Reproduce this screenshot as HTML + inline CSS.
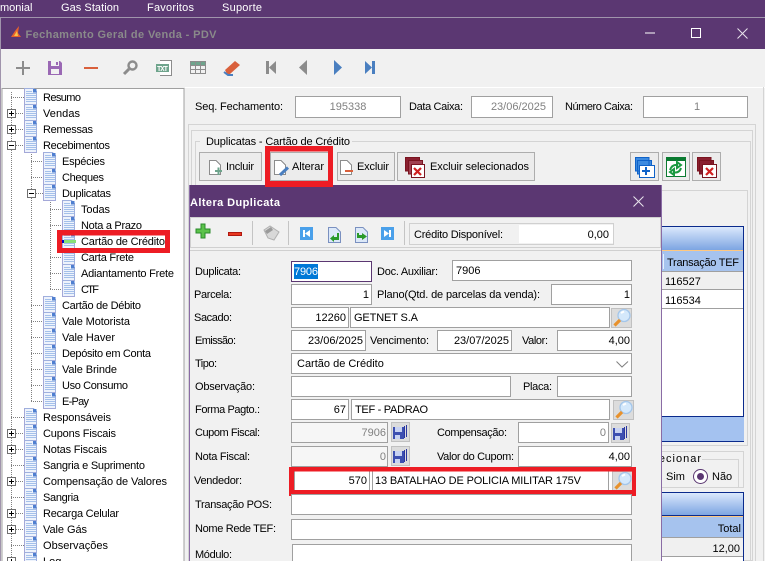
<!DOCTYPE html>
<html><head><meta charset="utf-8"><style>
html,body{margin:0;padding:0;background:#f1f1f1;overflow:hidden}
svg{display:block;position:absolute;left:0;top:0}
text{font:11px "Liberation Sans",sans-serif;fill:#000}
.r{text-anchor:end}
.w{fill:#fff}
.gr{fill:#808080}
rect.f{fill:#fff;stroke:#a0a0a0;stroke-width:1}
rect.b{fill:#ececec;stroke:#adadad;stroke-width:1}
.c{shape-rendering:crispEdges}
.dot{stroke:#808080;stroke-width:1;stroke-dasharray:1 1;fill:none}
</style></head><body>
<svg width="765" height="561" viewBox="0 0 765 561" xmlns="http://www.w3.org/2000/svg">
<defs>
<g id="d" class="c"><path d="M-.5 -1.500H8.500L11.500 1.500V14.500H-.5Z" fill="#eef3fc" stroke="#9fb0de"/><path d="M-.5 -1.500V14.500H11.500" fill="none" stroke="#a4a8d8"/><path d="M8 -1H11.500V2.500H8Z" fill="#4f7fd0"/><path d="M1 1.500H7M1 3.500H11M1 5.500H11M1 7.500H11M1 9.500H11M1 11.500H11" stroke="#a4c0ea"/></g>
<g id="p" class="c"><rect x=".5" y=".5" width="8" height="8" fill="#fff" stroke="#707070"/><path d="M2 4.500H7M4.500 2V7" stroke="#000"/></g>
<g id="m" class="c"><rect x=".5" y=".5" width="8" height="8" fill="#fff" stroke="#707070"/><path d="M2 4.500H7" stroke="#000"/></g>
<g id="lk"><rect class="c" x=".5" y=".5" width="20" height="19" fill="#dcdcdc" stroke="#c0c0c0"/><circle cx="13" cy="7.500" r="6" fill="#d4e8fb" stroke="#a4c6ea" stroke-width="1.300"/><path d="M10 5L13 3.500" stroke="#fff" stroke-width="2"/><path d="M9 12L3.500 17.500" stroke="#e8912c" stroke-width="3.200"/></g>
<g id="fd"><rect class="c" x=".5" y=".5" width="18" height="19" fill="#dcdcdc" stroke="#c0c0c0"/><path class="c" d="M2 5H13V17H2Z" fill="#3d4fb0"/><path class="c" d="M4 5H11V10H4Z" fill="#c8d2f2"/><path class="c" d="M4 13H9V17H4Z" fill="#c8d2f2"/><path class="c" d="M13 4H14V16H13ZM15 3H16V15H15Z" fill="#2a36a0"/></g>
<linearGradient id="g" x1="0" y1="0" x2="0" y2="1"><stop offset="0" stop-color="#dbe8fc"/><stop offset="1" stop-color="#7da5e2"/></linearGradient>
</defs>

<!-- top bars -->
<rect class="c" width="765" height="49" fill="#5b3772"/>
<rect class="c" y="17" width="765" height="1" fill="#a094ac"/>
<rect class="c" y="18" width="1" height="543" fill="#a094ac"/>
<text class="w" x="0" y="11">monial</text>
<text class="w" x="61" y="11" textLength="58">Gas Station</text>
<text class="w" x="147" y="11" textLength="47">Favoritos</text>
<text class="w" x="222" y="11" textLength="40">Suporte</text>
<path d="M11 37L15 31L19 26L18 33L21 37Z" fill="#e8622c"/><path d="M14 36L17 31L18 36Z" fill="#f7c34a"/>
<text x="25.500" y="38" textLength="191" style="font-weight:bold;fill:#8a8a8a">Fechamento Geral de Venda - PDV</text>
<path class="c" d="M645 33H655" stroke="#fff"/><rect class="c" x="691.500" y="28.500" width="9" height="9" fill="none" stroke="#fff"/>
<path d="M737.500 28.500L747.500 38.500M747.500 28.500L737.500 38.500" stroke="#e8e4ec"/>

<!-- main toolbar -->
<path class="c" d="M16 67H30V69H16ZM22 61H24V75H22Z" fill="#8c8c8c"/>
<path d="M48 61H60L62 63V75H48Z" fill="#9a68b4"/><rect class="c" x="51" y="61" width="8" height="5" fill="#f1f1f1"/><rect class="c" x="56" y="62" width="2" height="3" fill="#9a68b4"/><rect class="c" x="51" y="69" width="8" height="5" fill="#f1f1f1"/>
<rect class="c" x="84" y="67" width="14" height="2" fill="#d9603c"/>
<circle cx="132.500" cy="65.500" r="4" fill="none" stroke="#8c8c8c" stroke-width="2.400"/><path d="M129 69L124 74" stroke="#8c8c8c" stroke-width="3"/>
<path d="M160 60.500H171.500V75.500H160" fill="#fff" stroke="#8c8c8c"/><rect class="c" x="156" y="64" width="13" height="8" fill="#6ea48c"/><text x="157" y="71" style="font:bold 7px 'Liberation Mono',monospace;fill:#fff" textLength="11">TXT</text>
<rect class="c" x="190" y="61" width="16" height="4" fill="#6ea48c"/><path class="c" d="M190.500 61.500H205.500V73.500H190.500ZM190.500 69.500H205.500M195.500 61.500V73.500M200.500 61.500V73.500M190.500 65.500H205.500" fill="none" stroke="#8c8c8c"/>
<path d="M225 70L235 61L240 65L230 74L227 74Z" fill="#d9603c"/><path d="M224 72L228 75L233 75L228 75Z" fill="#4a7fc0" stroke="#4a7fc0" stroke-width="2"/>
<path class="c" d="M266 61H269V74H266Z" fill="#8c8c8c"/><path d="M276 61V74L269 67.500Z" fill="#8c8c8c"/>
<path d="M307 60V75L299 67.500Z" fill="#8c8c8c"/>
<path d="M334 60V75L342 67.500Z" fill="#4a7fc0"/>
<path d="M365 61V74L372 67.500Z" fill="#4a7fc0"/><path class="c" d="M372 61H375V74H372Z" fill="#4a7fc0"/>

<!-- tree panel -->
<rect class="c" x="2" y="88.500" width="182" height="480" fill="#fff" stroke="#a0a0a0" />
<rect class="c" x="185" y="87" width="580" height="1" fill="#fff"/>
<path class="c dot" d="M11.500 92V561M31.500 150V402M50.500 198V290"/>
<path class="c dot" d="M11 97.500H24M16 113.500H24M16 129.500H24M16 145.500H24M31 161.500H43M31 177.500H43M36 193.500H43M50 209.500H62M50 225.500H62M50 257.500H62M50 273.500H62M50 289.500H62M31 305.500H43M31 321.500H43M31 337.500H43M31 353.500H43M31 369.500H43M31 385.500H43M31 401.500H43M11 417.500H24M16 433.500H24M16 449.500H24M11 465.500H24M16 481.500H24M11 497.500H24M16 513.500H24M16 529.500H24M11 545.500H24"/>
<use href="#d" x="25" y="90"/><use href="#d" x="25" y="106"/><use href="#d" x="25" y="122"/><use href="#d" x="25" y="138"/>
<use href="#d" x="44" y="154"/><use href="#d" x="44" y="170"/><use href="#d" x="44" y="186"/>
<use href="#d" x="63" y="202"/><use href="#d" x="63" y="218"/><use href="#d" x="63" y="250"/><use href="#d" x="63" y="266"/><use href="#d" x="63" y="282"/>
<use href="#d" x="44" y="298"/><use href="#d" x="44" y="314"/><use href="#d" x="44" y="330"/><use href="#d" x="44" y="346"/><use href="#d" x="44" y="362"/><use href="#d" x="44" y="378"/><use href="#d" x="44" y="394"/>
<use href="#d" x="25" y="410"/><use href="#d" x="25" y="426"/><use href="#d" x="25" y="442"/><use href="#d" x="25" y="458"/><use href="#d" x="25" y="474"/><use href="#d" x="25" y="490"/><use href="#d" x="25" y="506"/><use href="#d" x="25" y="522"/><use href="#d" x="25" y="538"/><use href="#d" x="25" y="554"/>
<use href="#p" x="7" y="109"/><use href="#p" x="7" y="125"/><use href="#m" x="7" y="141"/><use href="#m" x="27" y="189"/>
<use href="#p" x="7" y="429"/><use href="#p" x="7" y="445"/><use href="#p" x="7" y="477"/><use href="#p" x="7" y="509"/><use href="#p" x="7" y="525"/><use href="#p" x="7" y="557"/>
<text x="43" y="101" textLength="38">Resumo</text><text x="43" y="117" textLength="37">Vendas</text><text x="43" y="133" textLength="50">Remessas</text><text x="43" y="149" textLength="67">Recebimentos</text>
<text x="62" y="165" textLength="43">Espécies</text><text x="62" y="181" textLength="42">Cheques</text><text x="62" y="197" textLength="49">Duplicatas</text>
<text x="81" y="213" textLength="29">Todas</text><text x="81" y="229" textLength="61">Nota a Prazo</text>
<text x="81" y="261" textLength="53">Carta Frete</text><text x="81" y="277" textLength="93">Adiantamento Frete</text><text x="81" y="293" textLength="18">CTF</text>
<text x="62" y="309" textLength="79">Cartão de Débito</text><text x="62" y="325" textLength="68">Vale Motorista</text><text x="62" y="341" textLength="53">Vale Haver</text><text x="62" y="357" textLength="89">Depósito em Conta</text><text x="62" y="373" textLength="55">Vale Brinde</text><text x="62" y="389" textLength="66">Uso Consumo</text><text x="62" y="405" textLength="27">E-Pay</text>
<text x="43" y="421" textLength="68">Responsáveis</text><text x="43" y="437" textLength="73">Cupons Fiscais</text><text x="43" y="453" textLength="64">Notas Fiscais</text><text x="43" y="469" textLength="102">Sangria e Suprimento</text><text x="43" y="485" textLength="124">Compensação de Valores</text><text x="43" y="501" textLength="36">Sangria</text><text x="43" y="517" textLength="76">Recarga Celular</text><text x="43" y="533" textLength="44">Vale Gás</text><text x="43" y="549" textLength="65">Observações</text><text x="43" y="565">Log</text>
<!-- selected -->
<rect class="c" x="62" y="235" width="103" height="13" fill="#fff"/>
<use href="#d" x="63" y="234"/><rect class="c" x="63" y="240" width="13" height="3" fill="#88e078"/><rect class="c" x="62" y="240" width="2" height="3" fill="#0000c8"/>
<text x="81" y="245" textLength="84">Cartão de Crédito</text>
<path class="c" d="M57 230H170V253H57ZM62 235.500V248H165V235.500Z" fill="#ed1c24" fill-rule="evenodd"/>

<!-- header -->
<text x="195" y="110" textLength="88">Seq. Fechamento:</text>
<rect class="f c" x="295.500" y="96.500" width="105" height="21"/><text class="gr" x="348" y="110" text-anchor="middle">195338</text>
<text x="409" y="110" textLength="54">Data Caixa:</text>
<rect class="f c" x="471.500" y="96.500" width="81" height="21"/><text class="gr r" x="546" y="110">23/06/2025</text>
<text x="565" y="110" textLength="68">Número Caixa:</text>
<rect class="f c" x="643.500" y="96.500" width="104" height="21"/><text class="gr" x="694" y="110">1</text>

<!-- frames -->
<rect class="c" x="188.500" y="124.500" width="567" height="440" fill="none" stroke="#d4d4d4"/>
<rect class="c" x="191.500" y="130.500" width="561" height="430" fill="none" stroke="#d4d4d4"/>
<rect class="c" x="195.500" y="141.500" width="555" height="420" fill="none" stroke="#d4d4d4"/>
<rect class="c" x="763" y="87" width="1" height="474" fill="#d4d4d4"/>
<rect class="c" x="200" y="136" width="152" height="12" fill="#f1f1f1"/>
<text x="206" y="145" textLength="144">Duplicatas - Cartão de Crédito</text>

<!-- buttons -->
<rect class="b c" x="199.500" y="152.500" width="62" height="28"/>
<path class="c" d="M209.500 160.500H216L220.500 165V174.500H209.500Z" fill="#fff" stroke="#8c8c8c"/><path class="c" d="M215 170H222V172H215ZM217.500 167.500H219.500V175H217.500Z" fill="#6ea48c"/>
<text x="226" y="170" textLength="28">Incluir</text>
<rect class="b c" x="270.500" y="152.500" width="58" height="28"/>
<path class="c" d="M274.500 160.500H281L285.500 165V174.500H274.500Z" fill="#fff" stroke="#8c8c8c"/><path d="M280 175L288 167.500" stroke="#4a7fc0" stroke-width="3"/>
<text x="292" y="170" textLength="32">Alterar</text>
<rect class="b c" x="337.500" y="152.500" width="57" height="28"/>
<path class="c" d="M340.500 160.500H347L351.500 165V174.500H340.500Z" fill="#fff" stroke="#8c8c8c"/><rect class="c" x="345" y="170" width="8" height="2" fill="#d9603c"/>
<text x="357" y="170" textLength="32">Excluir</text>
<rect class="b c" x="397.500" y="152.500" width="137" height="28"/>
<path class="c" d="M405.500 157.500H419.500V171H405.500Z" fill="#8a2030" stroke="#7a1420"/><path class="c" d="M408.500 160.500H422.500V174H408.500Z" fill="#a04050" stroke="#7a1420"/><path class="c" d="M411.500 164.500H424.500V177.500H411.500Z" fill="#fff" stroke="#7a1420"/><path d="M414 168L421 175M421 168L414 175" stroke="#d02020" stroke-width="2.200"/>
<text x="430" y="170" textLength="99">Excluir selecionados</text>

<rect class="b c" x="630.500" y="152.500" width="28" height="28"/>
<path class="c" d="M635.500 157.500H649V171H635.500ZM637.500 160.500H651.500V174H637.500Z" fill="#3c8ae0" stroke="#0f62c8"/><path class="c" d="M639.500 165.500H654.500V177.500H639.500Z" fill="#fff" stroke="#0f62c8"/><path class="c" d="M642 170H650V172H642ZM645 167H647V175H645Z" fill="#0f62c8"/>
<rect class="b c" x="662.500" y="152.500" width="27" height="28"/>
<rect class="c" x="666.500" y="157.500" width="19" height="19" fill="#fff" stroke="#0a7a30"/><rect class="c" x="666" y="157" width="20" height="4" fill="#0a7a30"/><path d="M670 170Q672 164 678 165M681 165L677 162V168ZM681 168Q679 174 673 172M670 172L674 169V175Z" stroke="#1a9a40" stroke-width="2" fill="none"/>
<rect class="b c" x="692.500" y="152.500" width="28" height="28"/>
<path class="c" d="M697.500 157.500H711V171H697.500ZM699.500 160.500H713.500V174H699.500Z" fill="#8a2030" stroke="#7a1420"/><path class="c" d="M702.500 164.500H716.500V177.500H702.500Z" fill="#fff" stroke="#7a1420"/><path d="M706 168L713 175M713 168L706 175" stroke="#d02020" stroke-width="2.200"/>

<!-- right table -->
<rect class="c" x="620.500" y="190.500" width="127" height="255" fill="none" stroke="#d4d4d4"/>
<rect class="c" x="650" y="226" width="94" height="191" fill="#fff"/>
<rect class="c" x="650" y="227" width="93" height="23" fill="url(#g)"/>
<rect class="c" x="650" y="250" width="93" height="1" fill="#ffc880"/>
<rect class="c" x="650" y="251" width="93" height="20" fill="#a6c3ee"/>
<rect class="c" x="650" y="271" width="93" height="19" fill="#f0f0f0"/>
<path class="c" d="M650 271.500H743M650 289.500H743M650 308.500H743" stroke="#a0a0a0"/>
<path class="c" d="M650 226.500H743.500V441" fill="none" stroke="#0a2a8c"/>
<path class="c" d="M663.500 254V269" stroke="#e8f0ff"/>
<text x="667" y="266" textLength="72">Transação TEF</text>
<text x="665" y="285">116527</text><text x="665" y="304">116534</text>
<rect class="c" x="650" y="417" width="94" height="24" fill="#a4c2f0"/>
<path class="c" d="M650 416.500H743M650 441.500H744" stroke="#0a2a8c"/>

<rect class="c" x="620.500" y="451.500" width="123" height="36" fill="none" stroke="#d4d4d4"/>
<rect class="c" x="630.500" y="459.500" width="108" height="28" fill="none" stroke="#d4d4d4"/>
<rect class="c" x="640" y="454" width="62" height="10" fill="#f1f1f1"/>
<text x="640" y="462" textLength="61">Selecionar</text>
<text x="666" y="480">Sim</text>
<circle cx="700.500" cy="476.500" r="7" fill="#fff" stroke="#5b3772"/><circle cx="700.500" cy="476.500" r="3.500" fill="#5b3772"/>
<text x="712" y="480">Não</text>

<rect class="c" x="650" y="492" width="94" height="69" fill="#fff"/>
<rect class="c" x="650" y="493" width="93" height="22" fill="url(#g)"/>
<rect class="c" x="650" y="515" width="93" height="2" fill="#ffc880"/>
<rect class="c" x="650" y="517" width="93" height="20" fill="#a6c3ee"/>
<rect class="c" x="650" y="537" width="93" height="19" fill="#f0f0f0"/>
<path class="c" d="M650 556.500H743M650 537.500H743" stroke="#a0a0a0"/>
<path class="c" d="M650 492.500H743.500V561M650 515.500H743" fill="none" stroke="#0a2a8c"/>
<text class="r" x="741" y="532">Total</text><text class="r" x="740" y="552">12,00</text>

<!-- dialog -->
<rect class="c" x="189" y="185" width="473" height="376" fill="#f1f1f1"/>
<rect class="c" x="189" y="185" width="473" height="32" fill="#5b3772"/>
<path class="c" d="M189.500 185V561M661.500 185V561" stroke="#8a6ca5"/>
<text class="w" x="190" y="206" textLength="90" style="font-weight:bold">Altera Duplicata</text>
<path d="M633.500 196.500L643.500 206.500M643.500 196.500L633.500 206.500" stroke="#e8e4ec"/>
<rect class="c" x="190.500" y="217.500" width="470" height="30" fill="#f1f1f1" stroke="#d0d0d0"/>
<rect class="c" x="190" y="250" width="471" height="1" fill="#d0d0d0"/>
<path d="M196 229H201V224H205V229H210V233H205V238H201V233H196Z" fill="#5bc24a" stroke="#2a8a2a"/>
<rect x="228.500" y="232.500" width="13" height="3" fill="#e83820" stroke="#b01810"/>
<path class="c" d="M252.500 221V245M288.500 221V245M404.500 221V245" stroke="#c4c4c4"/>
<path d="M264 230L270 226L279 232L274 240L268 238Z" fill="#d8d8d8" stroke="#b0b0b0"/><path d="M265 231L271 227L273 230L267 234Z" fill="#9a9a9a"/>
<rect class="c" x="300" y="227" width="13" height="13" fill="#4aa0ea"/><path class="c" d="M303 230H305V237H303Z" fill="#fff"/><path d="M310 230V237L305 233.500Z" fill="#fff"/>
<path d="M328.500 227.500H336L340.500 232V242.500H328.500Z" fill="#dce8f8" stroke="#7a90c0"/><path d="M337 233V237H334V235L330 238.500L334 242V240H339V233Z" fill="#2a9a2a"/>
<path d="M355.500 227.500H363L367.500 232V242.500H355.500Z" fill="#dce8f8" stroke="#7a90c0"/><path d="M357 233V238H362V240L367 236.500L362 233V235H359V233Z" fill="#2a9a2a"/>
<rect class="c" x="381" y="227" width="13" height="13" fill="#4aa0ea"/><path class="c" d="M389 230H391V237H389Z" fill="#fff"/><path d="M384 230V237L389 233.500Z" fill="#fff"/>
<rect class="c" x="409.500" y="223.500" width="204" height="21" fill="#f1f1f1" stroke="#d0d0d0"/>
<rect class="c" x="519" y="225" width="94" height="18" fill="#fff"/>
<text x="414" y="238" textLength="89">Crédito Disponível:</text>
<text class="r" x="609" y="238">0,00</text>

<text x="195" y="275" textLength="46">Duplicata:</text>
<rect class="c" x="291.500" y="261.500" width="80" height="20" fill="#fff" stroke="#5b3772"/>
<rect class="c" x="294" y="264" width="24" height="15" fill="#0078d7"/><text class="w" x="294" y="275" textLength="24">7906</text>
<text x="377" y="275" textLength="61">Doc. Auxiliar:</text>
<rect class="f c" x="452.500" y="260.500" width="179" height="20"/><text x="456" y="274">7906</text>

<text x="194" y="298" textLength="38">Parcela:</text>
<rect class="f c" x="291.500" y="284.500" width="80" height="20"/><text class="r" x="369" y="298">1</text>
<text x="377" y="298" textLength="163">Plano(Qtd. de parcelas da venda):</text>
<rect class="f c" x="551.500" y="284.500" width="80" height="20"/><text class="r" x="630" y="298">1</text>

<text x="194" y="321" textLength="38">Sacado:</text>
<rect class="f c" x="291.500" y="307.500" width="57" height="20"/><text class="r" x="346" y="321">12260</text>
<rect class="f c" x="350.500" y="307.500" width="259" height="20"/><text x="354" y="321" textLength="64">GETNET S.A</text>
<use href="#lk" x="611" y="308"/>

<text x="195" y="344" textLength="41">Emissão:</text>
<rect class="f c" x="291.500" y="330.500" width="74" height="20"/><text class="r" x="363" y="344">23/06/2025</text>
<text x="370" y="344" textLength="59">Vencimento:</text>
<rect class="f c" x="437.500" y="330.500" width="74" height="20"/><text class="r" x="509" y="344">23/07/2025</text>
<text x="522" y="344" textLength="26">Valor:</text>
<rect class="f c" x="557.500" y="330.500" width="74" height="20"/><text class="r" x="630" y="344">4,00</text>

<text x="195" y="367" textLength="22">Tipo:</text>
<rect class="f c" x="291.500" y="353.500" width="340" height="20"/><text x="297" y="367">Cartão de Crédito</text>
<path d="M616.500 361.500L622 367L628 361.500" fill="none" stroke="#808080"/>

<text x="195" y="390" textLength="60">Observação:</text>
<rect class="f c" x="291.500" y="376.500" width="219" height="20"/>
<text x="523" y="390" textLength="29">Placa:</text>
<rect class="f c" x="557.500" y="376.500" width="74" height="20"/>

<text x="195" y="413" textLength="65">Forma Pagto.:</text>
<rect class="f c" x="291.500" y="399.500" width="57" height="20"/><text class="r" x="346" y="413">67</text>
<rect class="f c" x="351.500" y="399.500" width="258" height="20"/><text x="355" y="413" textLength="73">TEF - PADRAO</text>
<use href="#lk" x="613" y="400"/>

<text x="195" y="436" textLength="65">Cupom Fiscal:</text>
<rect class="c" x="291.500" y="422.500" width="96" height="20" fill="#f6f6f6" stroke="#a0a0a0"/><text class="gr r" x="386" y="436">7906</text>
<use href="#fd" x="391" y="422"/>
<text x="437" y="436" textLength="70">Compensação:</text>
<rect class="f c" x="518.500" y="422.500" width="90" height="20"/><text class="gr r" x="606" y="436">0</text>
<use href="#fd" x="611" y="423"/>

<text x="195" y="460" textLength="55">Nota Fiscal:</text>
<rect class="c" x="291.500" y="446.500" width="96" height="20" fill="#f6f6f6" stroke="#a0a0a0"/><text class="gr r" x="386" y="460">0</text>
<use href="#fd" x="391" y="446"/>
<text x="437" y="460" textLength="77">Valor do Cupom:</text>
<rect class="f c" x="518.500" y="446.500" width="113" height="20"/><text class="r" x="630" y="460">4,00</text>

<text x="194" y="484" textLength="48">Vendedor:</text>
<rect class="c" x="294" y="471" width="338" height="20" fill="#fff"/>
<rect class="f c" x="294.500" y="470.500" width="75" height="20"/><text class="r" x="367" y="484">570</text>
<rect class="f c" x="372.500" y="470.500" width="236" height="20"/><text x="375" y="484" textLength="206">13 BATALHAO DE POLICIA MILITAR 175V</text>
<use href="#lk" x="612" y="471"/>
<path class="c" d="M289 467H636V496H289ZM294 471.500V490H632V471.500Z" fill="#ed1c24" fill-rule="evenodd"/>

<text x="195" y="508" textLength="77">Transação POS:</text>
<rect class="f c" x="291.500" y="494.500" width="340" height="20"/>
<text x="195" y="532" textLength="81">Nome Rede TEF:</text>
<rect class="f c" x="291.500" y="519.500" width="340" height="20"/>
<text x="195" y="558" textLength="37">Módulo:</text>
<rect class="f c" x="292.500" y="544.500" width="339" height="30"/>

<!-- Alterar highlight, drawn over the dialog top -->
<path class="c" d="M265 146H333V187H265ZM270 151.500V181H328V151.500Z" fill="#ed1c24" fill-rule="evenodd"/>
</svg>
</body></html>
